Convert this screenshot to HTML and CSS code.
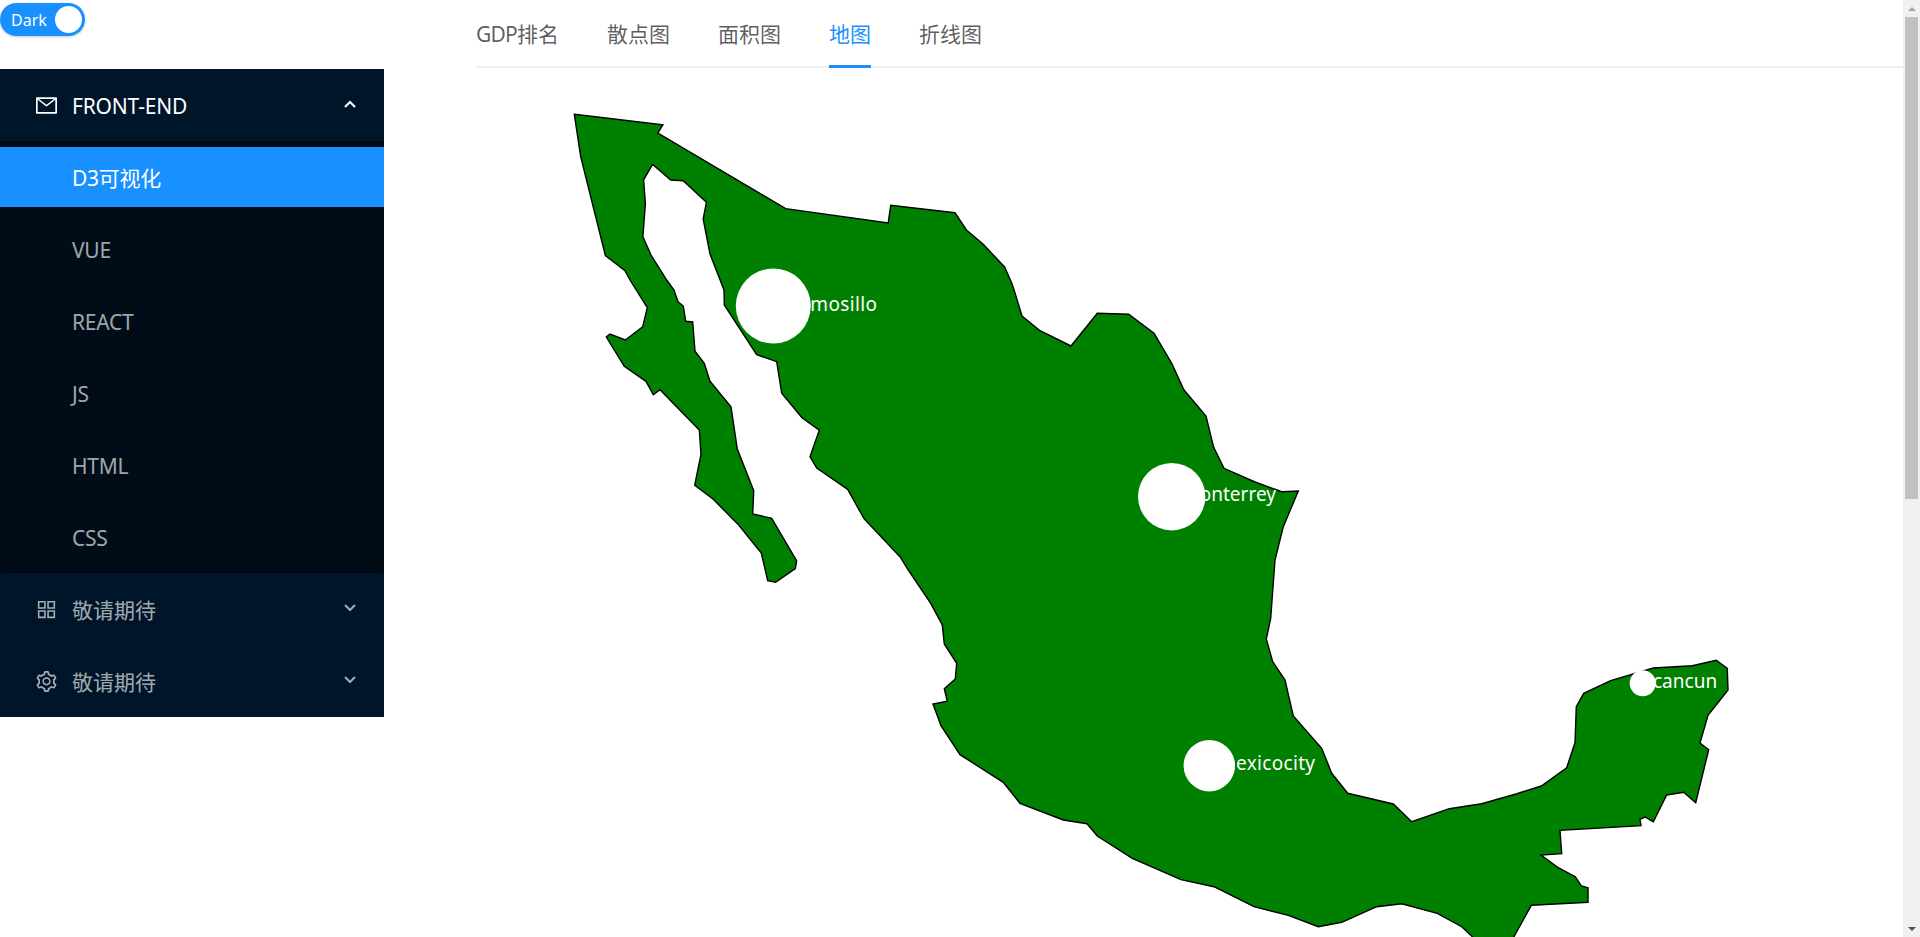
FILE: index.html
```html
<!DOCTYPE html>
<html lang="en">
<head>
  <meta charset="UTF-8">
  <meta name="viewport" content="width=device-width, initial-scale=1.0">
  <title>D3可视化</title>
  <link rel="stylesheet" href="styles.css">
</head>
<body>
  <div class="page">
    <aside class="sidebar">
      <div class="switch-row">
        <div class="switch">
          <span class="switch-label">Dark</span>
          <span class="switch-knob"></span>
        </div>
      </div>

      <nav class="menu">
        <div class="menu-title open">
          <svg class="menu-icon" viewBox="64 64 896 896" fill="currentColor"><path d="M928 160H96c-17.7 0-32 14.3-32 32v640c0 17.7 14.3 32 32 32h832c17.7 0 32-14.3 32-32V192c0-17.7-14.3-32-32-32zm-40 110.8V792H136V270.8l-27.6-21.5 39.3-50.5 42.8 33.3h643.1l42.8-33.3 39.3 50.5-27.7 21.5zM833.6 232L512 482 190.4 232l-42.8-33.3-39.3 50.5 27.6 21.5 341.6 265.6a55.99 55.99 0 0 0 68.7 0L888 270.8l27.6-21.5-39.3-50.5-42.7 33.2z"/></svg>
          <span class="menu-text latin">FRONT-END</span>
          <svg class="menu-arrow" viewBox="0 0 12 8" fill="none" stroke="currentColor" stroke-width="2"><path d="M1 7l5-5 5 5"/></svg>
        </div>
        <ul class="submenu">
          <li class="submenu-item selected">D3可视化</li>
          <li class="submenu-item">VUE</li>
          <li class="submenu-item">REACT</li>
          <li class="submenu-item">JS</li>
          <li class="submenu-item">HTML</li>
          <li class="submenu-item">CSS</li>
        </ul>
        <div class="menu-title">
          <svg class="menu-icon" viewBox="64 64 896 896" fill="currentColor"><path d="M464 144H160c-8.8 0-16 7.2-16 16v304c0 8.8 7.2 16 16 16h304c8.8 0 16-7.2 16-16V160c0-8.8-7.2-16-16-16zm-52 268H212V212h200v200zm452-268H560c-8.8 0-16 7.2-16 16v304c0 8.8 7.2 16 16 16h304c8.8 0 16-7.2 16-16V160c0-8.8-7.2-16-16-16zm-52 268H612V212h200v200zM464 544H160c-8.8 0-16 7.2-16 16v304c0 8.8 7.2 16 16 16h304c8.8 0 16-7.2 16-16V560c0-8.8-7.2-16-16-16zm-52 268H212V612h200v200zm452-268H560c-8.8 0-16 7.2-16 16v304c0 8.8 7.2 16 16 16h304c8.8 0 16-7.2 16-16V560c0-8.8-7.2-16-16-16zm-52 268H612V612h200v200z"/></svg>
          <span class="menu-text">敬请期待</span>
          <svg class="menu-arrow" viewBox="0 0 12 8" fill="none" stroke="currentColor" stroke-width="2"><path d="M1 1l5 5 5-5"/></svg>
        </div>
        <div class="menu-title">
          <svg class="menu-icon" viewBox="64 64 896 896" fill="currentColor"><path d="M924.8 625.7l-65.5-56c3.1-19 4.7-38.4 4.7-57.8s-1.6-38.8-4.7-57.8l65.5-56a32.03 32.03 0 0 0 9.3-35.2l-.9-2.6a443.74 443.74 0 0 0-79.7-137.9l-1.8-2.1a32.12 32.12 0 0 0-35.1-9.5l-81.3 28.9c-30-24.6-63.5-44-99.7-57.6l-15.7-85a32.05 32.05 0 0 0-25.8-25.7l-2.7-.5c-52.1-9.4-106.9-9.4-159 0l-2.7.5a32.05 32.05 0 0 0-25.8 25.7l-15.8 85.4a351.86 351.86 0 0 0-99 57.4l-81.9-29.1a32 32 0 0 0-35.1 9.5l-1.8 2.1a446.02 446.02 0 0 0-79.7 137.9l-.9 2.6c-4.5 12.5-.8 26.5 9.3 35.2l66.3 56.6c-3.1 18.8-4.6 38-4.6 57.1 0 19.2 1.5 38.4 4.6 57.1L99 625.5a32.03 32.03 0 0 0-9.3 35.2l.9 2.6c18.1 50.4 44.9 96.9 79.7 137.9l1.8 2.1a32.12 32.12 0 0 0 35.1 9.5l81.9-29.1c29.8 24.5 63.1 43.9 99 57.4l15.8 85.4a32.05 32.05 0 0 0 25.8 25.7l2.7.5a449.4 449.4 0 0 0 159 0l2.7-.5a32.05 32.05 0 0 0 25.8-25.7l15.7-85a350 350 0 0 0 99.7-57.6l81.3 28.9a32 32 0 0 0 35.1-9.5l1.8-2.1c34.8-41.1 61.6-87.5 79.7-137.9l.9-2.6c4.5-12.3.8-26.3-9.3-35zM788.3 465.9c2.5 15.1 3.8 30.6 3.8 46.1s-1.3 31-3.8 46.1l-6.6 40.1 74.7 63.9a370.03 370.03 0 0 1-42.6 73.6L721 702.8l-31.4 25.8c-23.9 19.6-50.5 35-79.3 45.8l-38.1 14.3-17.9 97a377.5 377.5 0 0 1-85 0l-17.9-97.2-37.8-14.5c-28.5-10.8-55-26.2-78.7-45.7l-31.4-25.9-93.4 33.2c-17-22.9-31.2-47.6-42.6-73.6l75.5-64.5-6.5-40c-2.4-14.9-3.7-30.3-3.7-45.5 0-15.3 1.2-30.6 3.7-45.5l6.5-40-75.5-64.5c11.3-26.1 25.6-50.7 42.6-73.6l93.4 33.2 31.4-25.9c23.7-19.5 50.2-34.9 78.7-45.7l37.9-14.3 17.9-97.2c28.1-3.2 56.8-3.2 85 0l17.9 97 38.1 14.3c28.7 10.8 55.4 26.2 79.3 45.8l31.4 25.8 92.8-32.9c17 22.9 31.2 47.6 42.6 73.6L781.8 426l6.5 39.9zM512 326c-97.2 0-176 78.8-176 176s78.8 176 176 176 176-78.8 176-176-78.8-176-176-176zm79.2 255.2A111.6 111.6 0 0 1 512 614c-29.9 0-58-11.7-79.2-32.8A111.6 111.6 0 0 1 400 502c0-29.9 11.7-58 32.8-79.2C454 401.6 482.1 390 512 390c29.9 0 58 11.6 79.2 32.8A111.6 111.6 0 0 1 624 502c0 29.9-11.7 58-32.8 79.2z"/></svg>
          <span class="menu-text">敬请期待</span>
          <svg class="menu-arrow" viewBox="0 0 12 8" fill="none" stroke="currentColor" stroke-width="2"><path d="M1 1l5 5 5-5"/></svg>
        </div>
      </nav>
    </aside>

    <main class="content">
      <div class="tabs">
        <div class="tab"><span class="latin-tight">GDP</span>排名</div>
        <div class="tab">散点图</div>
        <div class="tab">面积图</div>
        <div class="tab active">地图</div>
        <div class="tab">折线图</div>
      </div>

      <!-- viewBox uses page coordinates so the outline points are easy to check -->
      <svg class="map" viewBox="476 68 1427 869">
        <polygon class="country" points="574.3,114.3 662.9,124.7 657.9,133 785.7,208.7 888.2,223 890.7,205.3 955,212.7 966.4,230 983.2,244.3 1004.6,267 1011.8,283.3 1015,293 1022,316 1040,330.7 1071,346 1097.3,313.3 1128.7,314.3 1154,333.3 1171.7,363.3 1184,390 1206,416 1213.7,447.3 1224,468.3 1255,482 1281.7,491.7 1298.3,491 1283.3,526.7 1275,560 1270.7,618.3 1266.3,639 1272.7,661.7 1285,680 1293.3,716 1321.7,748.3 1331.7,773.3 1347.7,793.3 1393.3,804 1411.7,821.7 1449.3,808.7 1481.7,803.7 1516,794 1541.3,786 1566.7,767.7 1575,742.7 1576.3,706.7 1583.7,693.3 1610.7,680.7 1653.3,668 1692.3,665.7 1716.3,660.3 1727.3,668.3 1728,690 1708,715.3 1700,743 1708.7,749.7 1695.7,802.7 1683.7,792.3 1666.7,795 1653.3,821.7 1645,817 1640,819.3 1641,825.7 1560,830.3 1561.7,853.7 1541,855 1558.3,867.7 1575.3,876.7 1581.3,886 1588,887.7 1588,902.3 1531.3,905.3 1511,942 1478,942 1461.7,926.7 1437.3,913.3 1401.7,903.7 1376.7,906.7 1341.7,922.3 1318.3,926.7 1288.3,915.3 1254,906.7 1214,886.7 1181,879.7 1132.3,858.3 1097.3,836 1087,823.7 1063.3,820 1020,803.3 1003.3,782.3 960,754.7 941,725.7 933,704 947.3,701.3 944.3,688.7 955.3,679 956.7,663.3 944.3,644 942.3,625 930.7,603.3 908.3,570 900,556.7 864,518.7 847.7,489.3 816.7,468 810,456.7 819.3,430.3 802,417.7 781.7,393.3 776.7,361.7 756.7,354.7 724.3,305 724,290 710,254 703.2,219 706.4,202.3 683.2,180.7 670.7,180 652.5,164.3 643.6,180 645.4,203.3 642.9,236.7 651,255 666.7,280 674,290 678,301.7 683.3,306 685.7,321.3 692.7,322 695,351.3 704.3,363.3 710,381.3 731,406.7 737.3,449 753.7,490.7 752.7,514 771.7,518.3 796.7,561 795.3,568.7 775.7,582.3 767.7,580.7 761.3,553 738.7,525 713.3,499.3 694.7,485.3 701,454.3 699.3,430 660,389.7 653.3,394.7 646,381.3 624.3,366.3 606.3,337 610,334 625.3,340 642.7,326.7 647.3,307.7 630,280 625,270.7 605.4,255.7 580.7,156.7"/>
        <text class="city-label" x="779" y="311" textLength="98">hermosillo</text>
        <text class="city-label" x="1182" y="501">monterrey</text>
        <text class="city-label" x="1218" y="770" textLength="97">mexicocity</text>
        <text class="city-label" x="1653" y="688">cancun</text>
        <circle class="city" cx="773.3" cy="306" r="37.5"/>
        <circle class="city" cx="1171.7" cy="496.7" r="33.7"/>
        <circle class="city" cx="1209.3" cy="765.7" r="25.7"/>
        <circle class="city" cx="1642.7" cy="683.3" r="13"/>
      </svg>
    </main>

    <div class="scrollbar">
      <div class="scroll-btn"><span class="arrow-up"></span></div>
      <div class="scroll-track"><div class="scroll-thumb"></div></div>
      <div class="scroll-btn"><span class="arrow-down"></span></div>
    </div>
  </div>
</body>
</html>
```
FILE: styles.css
```css
* {
  box-sizing: border-box;
}
html, body {
  height: 100%;
  margin: 0;
  overflow: hidden;
}
body {
  font-family: "Noto Sans", "Noto Sans CJK SC", sans-serif;
  background-color: #fff;
}
.page {
  display: flex;
  height: 100vh;
}

/* left column */
.sidebar {
  width: 384px;
  flex-shrink: 0;
}
.switch-row {
  height: 69px;
  padding-top: 3px;
}
.switch {
  display: flex;
  align-items: center;
  justify-content: space-between;
  width: 85px;
  height: 33px;
  padding: 0 3px 0 11px;
  background-color: #1890ff;
  border-radius: 17px;
  box-shadow: 0 1px 3px rgba(0, 35, 80, 0.25);
}
.switch-label {
  font-size: 16px;
  color: #fff;
}
.switch-knob {
  width: 27px;
  height: 27px;
  background-color: #fff;
  border-radius: 50%;
}
.menu {
  background-color: #001529;
}
.menu-title {
  display: flex;
  align-items: center;
  height: 72px;
  padding: 0 28px 0 36px;
  font-size: 21px;
  color: rgba(255, 255, 255, 0.65);
}
.menu-title.open {
  color: #fff;
}
.menu-icon {
  width: 21px;
  height: 21px;
  margin-right: 15px;
  flex-shrink: 0;
}
.menu-text {
  flex: 1;
}
.latin {
  letter-spacing: -0.2px;
  padding-top: 2px;
}
.latin-tight {
  letter-spacing: -0.8px;
}
.menu-arrow {
  width: 12px;
  height: 8px;
  flex-shrink: 0;
  margin-top: -2px;
}
.submenu {
  display: flex;
  flex-direction: column;
  gap: 12px;
  list-style: none;
  margin: 0;
  padding: 6px 0;
  background-color: #000c17;
  box-shadow: inset 0 2px 8px rgba(0, 0, 0, 0.45);
}
.submenu-item {
  height: 60px;
  line-height: 62px;
  padding-left: 72px;
  font-size: 21px;
  letter-spacing: -0.25px;
  color: rgba(255, 255, 255, 0.65);
}
.submenu-item.selected {
  background-color: #1890ff;
  color: #fff;
}

/* tabs and map */
.content {
  flex: 1;
  min-width: 0;
  margin-left: 92px;
}
.tabs {
  display: flex;
  gap: 48px;
  height: 68px;
  border-bottom: 2px solid #f0f0f0;
}
.tab {
  height: 68px;
  padding-top: 19px;
  font-size: 21px;
  line-height: 31px;
  color: rgba(0, 0, 0, 0.65);
}
.tab.active {
  color: #1890ff;
  border-bottom: 3px solid #1890ff;
}
.map {
  display: block;
  width: 1427px;
  height: 869px;
}
.country {
  fill: green;
  stroke: #000;
  stroke-width: 1.4;
}
.city {
  fill: #fff;
}
.city-label {
  fill: #fff;
  font-size: 19px;
}

/* drawn scrollbar, the page itself does not scroll */
.scrollbar {
  display: flex;
  flex-direction: column;
  width: 17px;
  flex-shrink: 0;
  background-color: #f1f1f1;
}
.scroll-btn {
  display: flex;
  align-items: center;
  justify-content: center;
  height: 17px;
  flex-shrink: 0;
}
.arrow-up {
  border-left: 4px solid transparent;
  border-right: 4px solid transparent;
  border-bottom: 4px solid #a3a3a3;
}
.arrow-down {
  border-left: 4px solid transparent;
  border-right: 4px solid transparent;
  border-top: 4px solid #505050;
}
.scroll-track {
  flex: 1;
  padding: 0 2px;
}
.scroll-thumb {
  height: 482px;
  background-color: #c1c1c1;
}
```
